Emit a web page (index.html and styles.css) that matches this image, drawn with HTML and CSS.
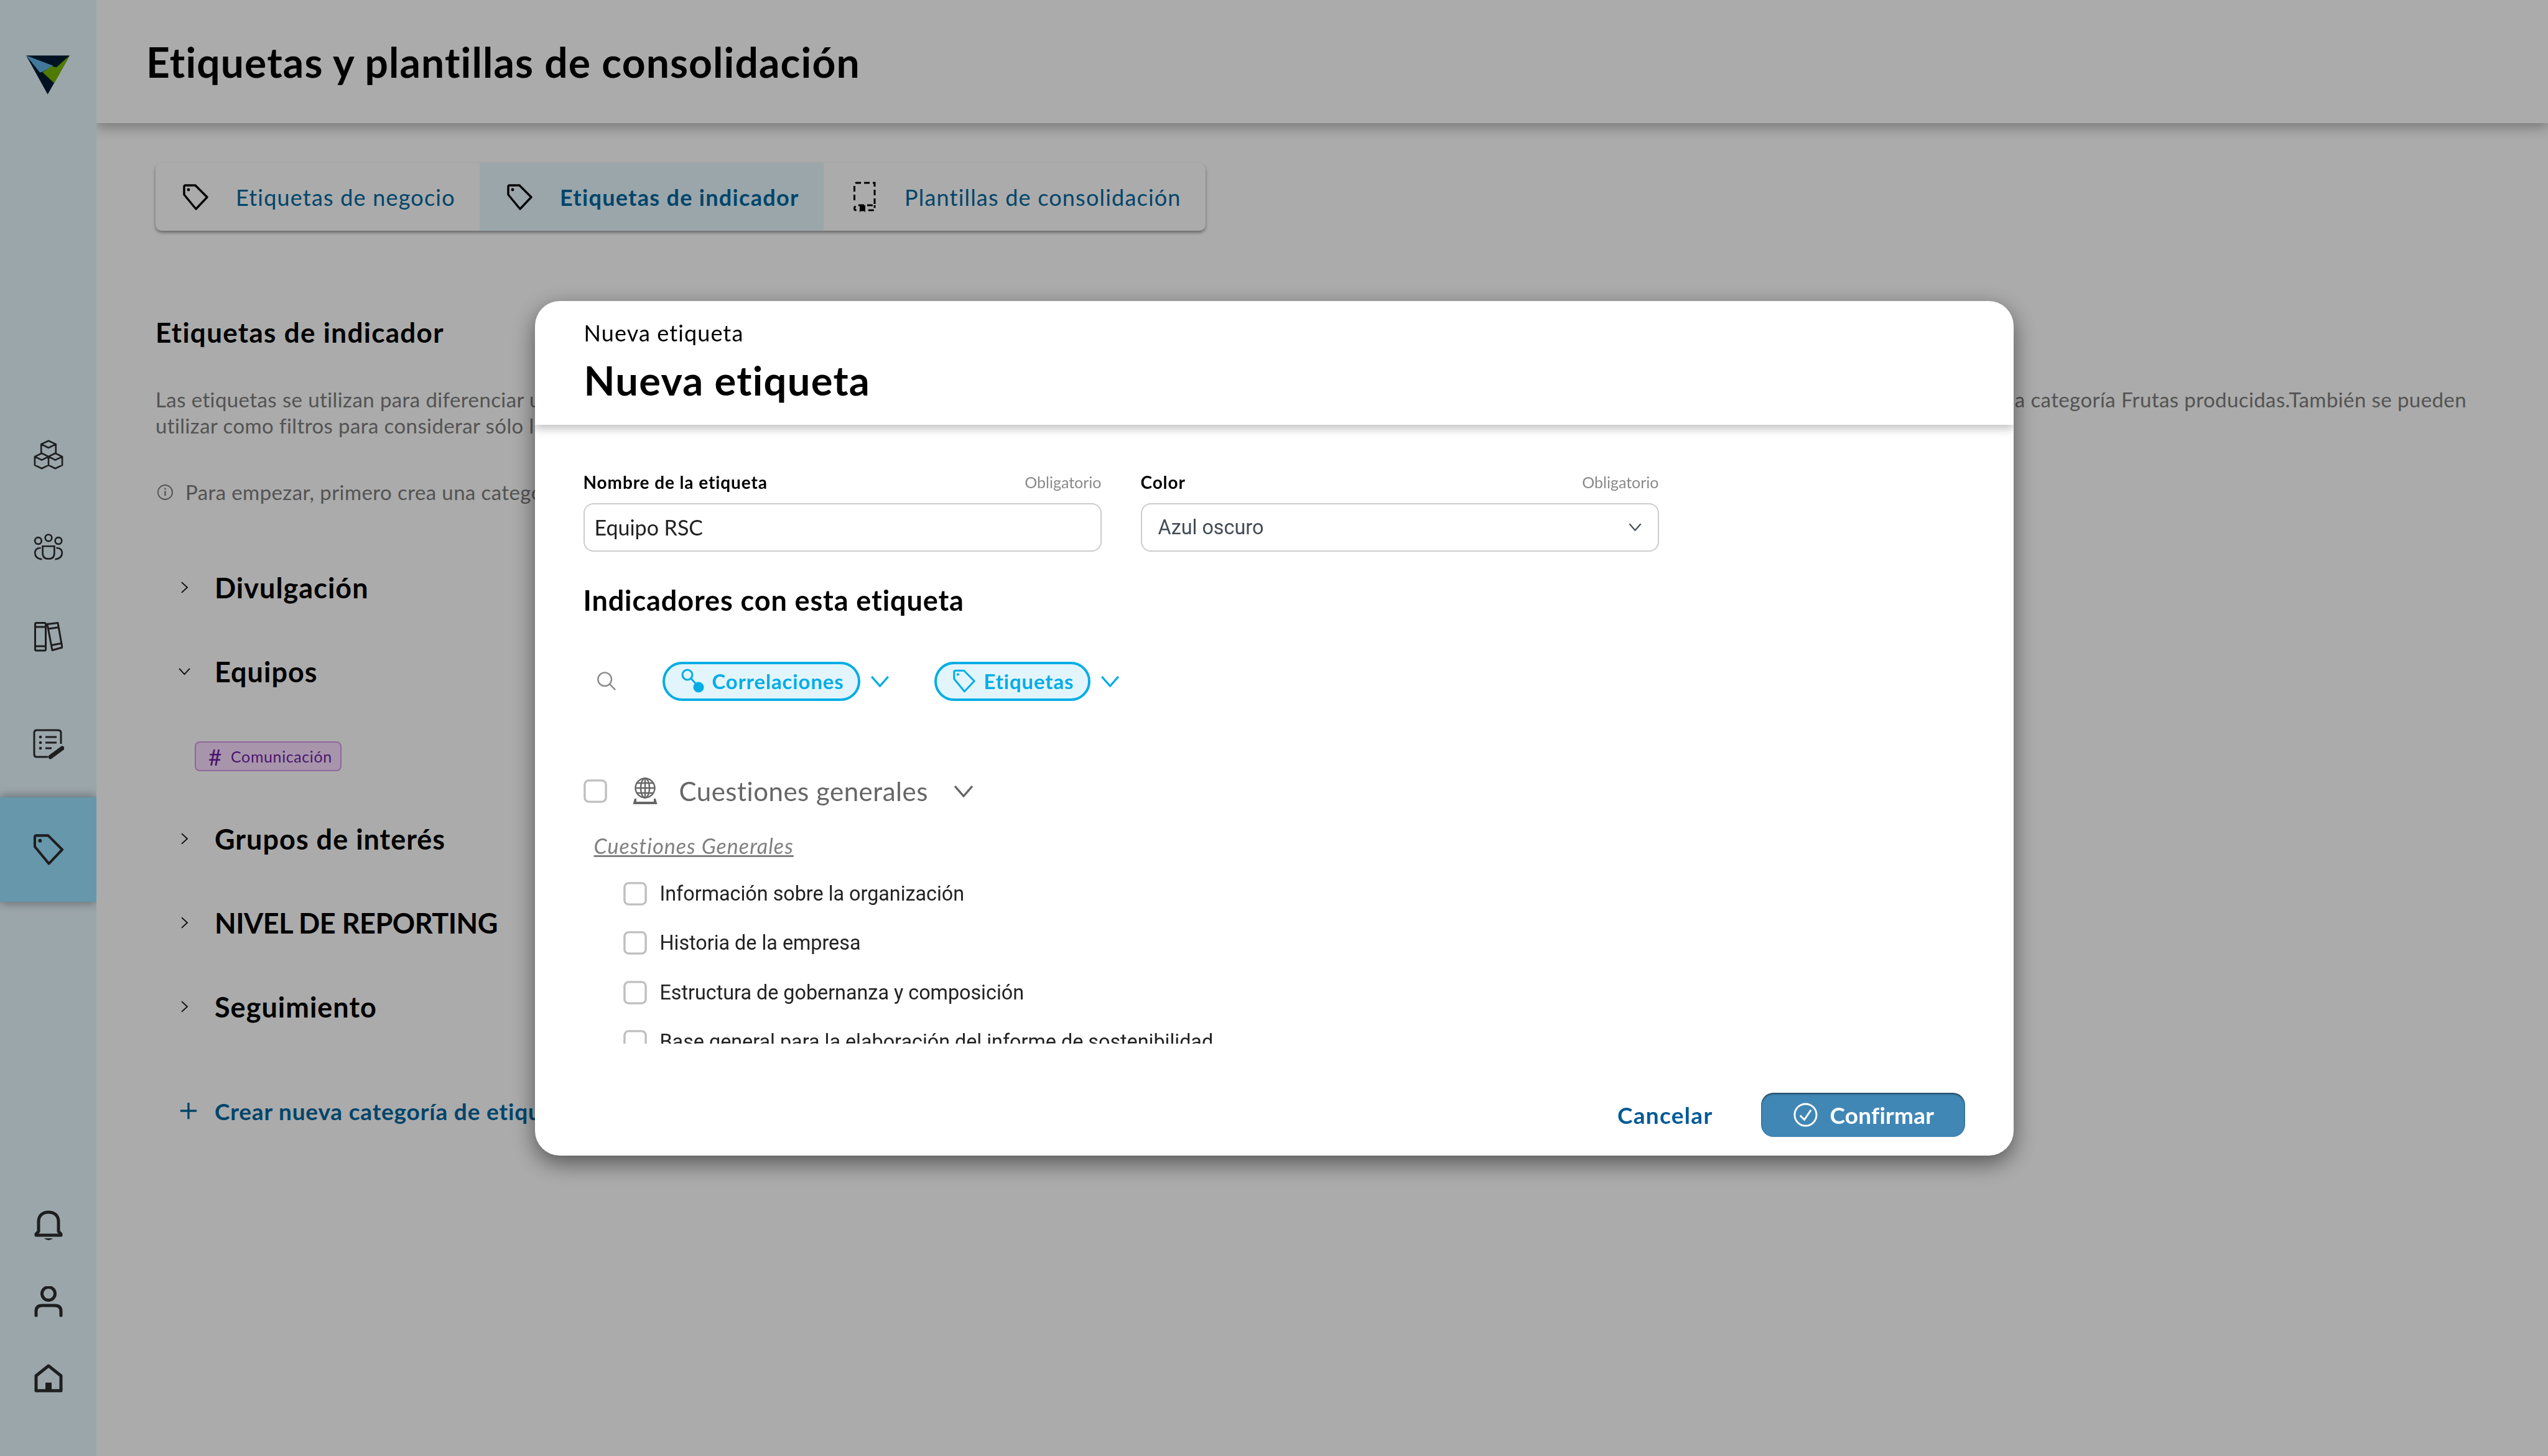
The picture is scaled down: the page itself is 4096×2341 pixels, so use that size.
FILE: index.html
```html
<!DOCTYPE html>
<html lang="es">
<head>
<meta charset="utf-8">
<title>Etiquetas y plantillas de consolidación</title>
<link rel="stylesheet" href="styles.css">
</head>
<body>
<svg class="defs" aria-hidden="true">
  <symbol id="tag" viewBox="0 0 41 42"><path d="M2 4Q2 2 4 2H20L39 21 21 40 2 17Z" fill="none" stroke="currentColor" stroke-width="3.4" stroke-linejoin="round"/><circle cx="9" cy="9" r="2.4" fill="currentColor"/></symbol>
  <symbol id="chev" viewBox="0 0 32 20"><path d="M2 2L16 18 30 2" fill="none" stroke="currentColor" stroke-width="3.4"/></symbol>
  <symbol id="box" viewBox="0 0 40 40"><rect x="2" y="2" width="36" height="36" rx="7" fill="#fff" stroke="#bfbfbf" stroke-width="3.6"/></symbol>
</svg>
<div class="app">
  <aside class="sidebar">
    <svg class="logo" viewBox="38 30 212 190"><polygon points="38,30 250,30 143,220" fill="#051c33"/><polygon points="38,30 170,80 118,110 105,113" fill="#62b4e9"/><polygon points="118,112 162,82 185,88 250,30 175,165" fill="#76b800"/></svg>
    <nav class="nav">
      <div class="nav-item cube"><svg class="nav-icon" viewBox="30 30 170 165"><path d="M115 37L155 55 115 75 75 55ZM75 55V105M155 55V105M78 105L115 123V170L78 188 40 170V123ZM40 123L78 142 115 123M152 105L190 123V170L152 188 115 170V123ZM115 123L152 142 190 123" fill="none" stroke="currentColor" stroke-width="9" stroke-linejoin="round"/></svg></div>
      <div class="nav-item people"><svg class="nav-icon" viewBox="35 485 160 145"><g fill="none" stroke="currentColor" stroke-width="8.5" stroke-linecap="round"><circle cx="115" cy="512" r="17"/><circle cx="62" cy="527" r="17"/><circle cx="166" cy="527" r="17"/><path d="M85 555H145V590Q145 620 115 620 85 620 85 590ZM72 564Q45 566 45 590 47 618 78 622M158 564Q185 566 185 590 183 618 152 622"/></g></svg></div>
      <div class="nav-item books"><svg class="nav-icon" viewBox="0 0 46 48"><g fill="none" stroke="currentColor" stroke-width="3" stroke-linejoin="round"><rect x="1.5" y="1.5" width="17" height="44.5" rx="2"/><path d="M2 8H18M2 39H18M21 3.5L38 1.5 45 41 29 45.5ZM23 11L40 8.500M27 37.500L43 34.500"/></g></svg></div>
      <div class="nav-item note"><svg class="nav-icon" viewBox="0 0 50 50"><g fill="none" stroke="currentColor" stroke-width="3"><path d="M24 45H6Q2 45 2 41V6Q2 2 6 2H40Q45 2 45 6V24M20 13H38M20 22H38M20 31H30"/><path d="M28 45L47 31" stroke-width="7" stroke-linecap="round"/></g><circle cx="12" cy="13" r="2.300" fill="currentColor"/><circle cx="12" cy="22" r="2.300" fill="currentColor"/><circle cx="12" cy="31" r="2.300" fill="currentColor"/></svg></div>
      <div class="nav-item active"><svg class="nav-icon"><use href="#tag"/></svg></div>
    </nav>
    <div class="nav-bottom">
      <div class="nav-item"><svg class="nav-icon" viewBox="0 0 46 50"><path d="M3 41H43V39L39 35V19C39 9 32 4 23 4 14 4 7 9 7 19V35L3 39Z" fill="none" stroke="currentColor" stroke-width="5" stroke-linejoin="round"/><path d="M16 46H30Q23 52 16 46Z" fill="currentColor"/></svg></div>
      <div class="nav-item"><svg class="nav-icon" viewBox="0 0 46 50"><circle cx="23" cy="12" r="10.500" fill="none" stroke="currentColor" stroke-width="5"/><path d="M3 47V40Q3 31 13 31H33Q43 31 43 40V47" fill="none" stroke="currentColor" stroke-width="5" stroke-linecap="round"/></svg></div>
      <div class="nav-item"><svg class="nav-icon" viewBox="0 0 46 46"><path d="M23 3L43 19V43H3V19Z" fill="none" stroke="currentColor" stroke-width="5" stroke-linejoin="round"/><rect x="18" y="30" width="10" height="12" fill="currentColor"/></svg></div>
    </div>
  </aside>
  <main class="main">
    <header class="header"><h1 class="page-title">Etiquetas y plantillas de consolidación</h1></header>
    <div class="content">
      <div class="tabs">
        <div class="tab t1"><svg class="tab-icon"><use href="#tag"/></svg><span>Etiquetas de negocio</span></div>
        <div class="tab t2 tab-on"><svg class="tab-icon"><use href="#tag"/></svg><span>Etiquetas de indicador</span></div>
        <div class="tab t3"><svg class="tab-icon tpl" viewBox="0 0 36 49"><path d="M1.500 30V6Q1.500 2 5 2H34V38H8Q1.500 38 1.500 44 1.500 46 5 46H34V38" fill="none" stroke="#000" stroke-width="3" stroke-dasharray="9 5"/><path d="M10 38H19V49L14.500 45 10 49Z"/></svg><span>Plantillas de consolidación</span></div>
      </div>
      <h2 class="section-title">Etiquetas de indicador</h2>
      <div class="desc">
        <p class="desc-line"><span>Las etiquetas se utilizan para diferenciar unos</span><span>la categoría Frutas producidas.También se pueden</span></p>
        <p class="desc-line">utilizar como filtros para considerar sólo las</p>
      </div>
      <div class="hint"><svg class="info" viewBox="0 0 28 28"><circle cx="14" cy="14" r="12" fill="none" stroke="currentColor" stroke-width="2"/><path d="M14 12V20M14 7V9.500" stroke="currentColor" stroke-width="2.400"/></svg><span>Para empezar, primero crea una categoría</span></div>
      <div class="accordion">
        <div class="acc-row"><svg class="acc-chev right" viewBox="0 0 20 32"><path d="M3 3L17 16 3 29" fill="none" stroke="currentColor" stroke-width="2.800"/></svg><span>Divulgación</span></div>
        <div class="acc-row"><svg class="acc-chev down" viewBox="0 0 32 20"><path d="M3 3L16 17 29 3" fill="none" stroke="currentColor" stroke-width="2.800"/></svg><span>Equipos</span></div>
        <div class="acc-body"><span class="chip"><span class="chip-hash">#</span>Comunicación</span></div>
        <div class="acc-row"><svg class="acc-chev right" viewBox="0 0 20 32"><path d="M3 3L17 16 3 29" fill="none" stroke="currentColor" stroke-width="2.800"/></svg><span>Grupos de interés</span></div>
        <div class="acc-row"><svg class="acc-chev right" viewBox="0 0 20 32"><path d="M3 3L17 16 3 29" fill="none" stroke="currentColor" stroke-width="2.800"/></svg><span class="caps">NIVEL DE REPORTING</span></div>
        <div class="acc-row"><svg class="acc-chev right" viewBox="0 0 20 32"><path d="M3 3L17 16 3 29" fill="none" stroke="currentColor" stroke-width="2.800"/></svg><span>Seguimiento</span></div>
      </div>
      <div class="create"><svg class="plus" viewBox="0 0 32 32"><path d="M16 2V30M2 16H30" stroke="currentColor" stroke-width="3.600"/></svg><span>Crear nueva categoría de etiquetas</span></div>
    </div>
  </main>
</div>
<div class="overlay">
  <section class="modal">
    <header class="modal-head">
      <div class="modal-kicker">Nueva etiqueta</div>
      <h2 class="modal-title">Nueva etiqueta</h2>
    </header>
    <div class="modal-body">
      <div class="fields">
        <div class="field">
          <div class="field-top"><label class="field-label">Nombre de la etiqueta</label><span class="field-req">Obligatorio</span></div>
          <div class="input">Equipo RSC</div>
        </div>
        <div class="field">
          <div class="field-top"><label class="field-label">Color</label><span class="field-req">Obligatorio</span></div>
          <div class="input select"><span>Azul oscuro</span><svg class="sel-chev"><use href="#chev"/></svg></div>
        </div>
      </div>
      <h3 class="sub-title">Indicadores con esta etiqueta</h3>
      <div class="filters">
        <svg class="search" viewBox="0 0 34 34"><circle cx="14" cy="14" r="11.500" fill="none" stroke="currentColor" stroke-width="2.600"/><path d="M22 22L32 32" stroke="currentColor" stroke-width="2.600"/></svg>
        <span class="pill p1"><svg class="pill-icon" viewBox="0 0 38 42"><circle cx="10" cy="11" r="8" fill="none" stroke="currentColor" stroke-width="3"/><path d="M16 17L25 27" stroke="currentColor" stroke-width="3"/><circle cx="28" cy="31" r="8.500" fill="currentColor"/></svg>Correlaciones</span>
        <svg class="pill-chev"><use href="#chev"/></svg>
        <span class="pill p2"><svg class="pill-icon tag-ic"><use href="#tag"/></svg>Etiquetas</span>
        <svg class="pill-chev"><use href="#chev"/></svg>
      </div>
      <div class="group">
        <svg class="check"><use href="#box"/></svg>
        <svg class="globe" viewBox="0 0 40 44"><g fill="none" stroke="currentColor" stroke-width="2.400"><circle cx="20" cy="17" r="15.500"/><ellipse cx="20" cy="17" rx="7" ry="15.500"/><path d="M4.500 17H35.500M7 9H33M7 25H33M20 1.500V32.500"/></g><path d="M3 34H6V39H34V34H37L39.500 43H.5Z" fill="currentColor"/></svg>
        <span class="group-name">Cuestiones generales</span>
        <svg class="group-chev"><use href="#chev"/></svg>
      </div>
      <div class="scroll">
        <div class="cat">Cuestiones Generales</div>
        <div class="item"><svg class="check"><use href="#box"/></svg><span>Información sobre la organización</span></div>
        <div class="item"><svg class="check"><use href="#box"/></svg><span>Historia de la empresa</span></div>
        <div class="item"><svg class="check"><use href="#box"/></svg><span>Estructura de gobernanza y composición</span></div>
        <div class="item"><svg class="check"><use href="#box"/></svg><span>Base general para la elaboración del informe de sostenibilidad</span></div>
      </div>
    </div>
    <footer class="modal-foot">
      <span class="cancel">Cancelar</span>
      <span class="confirm"><svg class="conf-icon" viewBox="0 0 40 40"><circle cx="20" cy="20" r="18" fill="none" stroke="#fff" stroke-width="3"/><path d="M11 21L18 28 29 12" fill="none" stroke="#fff" stroke-width="3"/></svg>Confirmar</span>
    </footer>
  </section>
</div>
</body>
</html>
```
FILE: styles.css
```css
* { box-sizing: border-box; }
html, body { margin: 0; height: 100%; overflow: hidden; }
body { font-family: "Lato", "Open Sans", sans-serif; color: #000; background: #fff; }
h1, h2, h3, p { margin: 0; font-weight: inherit; }
.defs { position: absolute; width: 0; height: 0; }
.app { display: flex; height: 2341px; }

.sidebar { width: 155px; flex: none; display: flex; flex-direction: column; background: #e8f8ff; color: #2d2d2d; padding-top: 89px; }
.logo { width: 70px; height: 63px; margin-left: 42px; flex: none; }
.nav { margin-top: 549px; display: flex; flex-direction: column; }
.nav-item { height: 60px; display: flex; align-items: center; justify-content: center; }
.nav-icon { width: 50px; height: 50px; }
.people { margin-top: 88px; }
.books { margin-top: 85px; }
.books .nav-icon { width: 46px; }
.note { margin-top: 113px; }
.nav-item.active { margin-top: 55px; height: 168px; background: #99e1ff; box-shadow: 0 0 16px rgba(0,0,0,.45); clip-path: inset(-24px 0 -24px 0); }
.nav-bottom { margin-top: auto; padding-bottom: 95px; display: flex; flex-direction: column; gap: 63px; }
.nav-bottom .nav-icon { width: 46px; }

.main { flex: 1; min-width: 0; }
.header { height: 198px; padding-left: 80px; display: flex; align-items: center; box-shadow: 0 6px 20px rgba(0,0,0,.32); clip-path: inset(0 0 -40px 0); }
.page-title { font-size: 66px; font-weight: 700; letter-spacing: 1.100px; }
.content { padding: 64px 95px 0; }

.tabs { display: inline-flex; height: 109px; border-radius: 10px; box-shadow: 0 3px 5px rgba(0,0,0,.4); }
.tab { display: flex; align-items: center; color: #00689f; font-size: 36px; letter-spacing: 1.200px; }
.t1 { width: 521px; padding-left: 44px; }
.t2 { width: 553px; padding-left: 44px; }
.t3 { width: 614px; padding-left: 48px; }
.tab-on { background: #e8f8ff; font-weight: 700; letter-spacing: 1.300px; }
.tab-icon { width: 41px; height: 42px; color: #000; margin-right: 44px; flex: none; }
.tpl { width: 36px; height: 49px; margin-right: 46px; }

.section-title { margin-top: 138px; height: 50px; line-height: 50px; font-size: 44px; font-weight: 700; letter-spacing: 1.300px; }
.desc { margin-top: 62px; color: #7c7c7c; font-size: 33px; line-height: 42px; width: 3715px; letter-spacing: .4px; }
.desc-line { display: flex; justify-content: space-between; }
.hint { margin-top: 65px; height: 42px; display: flex; align-items: center; color: #7c7c7c; font-size: 33px; letter-spacing: .4px; }
.info { width: 27px; height: 27px; margin: 0 19px 0 2px; }

.accordion { margin-top: 65px; }
.acc-row { height: 135px; display: flex; align-items: center; position: relative; padding-left: 95px; font-size: 45px; font-weight: 700; letter-spacing: 1px; }
.caps { letter-spacing: -.5px; }
.acc-chev { position: absolute; color: #111; }
.right { left: 40px; width: 13px; height: 21px; }
.down { left: 36px; width: 21px; height: 13px; }
.acc-body { padding: 45px 0 41px 63px; height: 134px; }
.chip { display: inline-flex; align-items: center; width: 236px; height: 48px; padding-left: 20px; border: 2px solid #d39ae8; border-radius: 8px; background: #fbdfff; color: #6f1fa8; font-size: 25px; letter-spacing: .6px; }
.chip-hash { font-size: 37px; line-height: 1; margin-right: 14px; }

.create { margin-top: 75px; height: 50px; display: flex; align-items: center; color: #00689f; font-size: 37px; font-weight: 700; letter-spacing: .8px; }
.plus { width: 30px; height: 30px; margin: 0 27px 0 38px; }

.overlay { position: fixed; inset: 0; background: rgba(0,0,0,.33); display: flex; align-items: center; justify-content: center; }
.modal { width: 2377px; height: 1374px; background: #fff; border-radius: 40px; box-shadow: 0 12px 36px rgba(0,0,0,.5); display: flex; flex-direction: column; overflow: hidden; }
.modal-head { height: 199px; flex: none; padding: 30px 79px 0; box-shadow: 0 6px 14px rgba(0,0,0,.25); position: relative; }
.modal-kicker { font-size: 36px; line-height: 42px; letter-spacing: 1.100px; }
.modal-title { font-size: 65px; line-height: 78px; font-weight: 700; margin-top: 16px; letter-spacing: 1.300px; }
.modal-body { flex: 1; min-height: 0; padding: 73px 78px 0; }

.fields { display: flex; gap: 63px; }
.field { width: 833px; }
.field-top { height: 38px; display: flex; justify-content: space-between; align-items: center; margin-bottom: 15px; }
.field-label { font-size: 28px; font-weight: 700; letter-spacing: .9px; }
.field-req { font-size: 25px; color: #8a8a8a; }
.input { height: 78px; border: 2px solid #ccc; border-radius: 16px; padding: 0 16px; display: flex; align-items: center; font-size: 34px; color: #222; }
.select { justify-content: space-between; padding: 0 26px; font-family: "Roboto", sans-serif; font-size: 32.300px; color: #444b54; }
.sel-chev { width: 21px; height: 13px; color: #444b54; }

.sub-title { margin-top: 53px; height: 50px; line-height: 50px; font-size: 45px; font-weight: 700; letter-spacing: .9px; }
.filters { margin-top: 74px; height: 63px; display: flex; align-items: center; color: #00ade6; }
.search { width: 32px; height: 32px; margin-left: 21px; margin-right: 74px; color: #8a8a8a; }
.pill { height: 63px; border: 4px solid #00ade6; border-radius: 32px; background: #e3f5fc; display: inline-flex; align-items: center; padding-left: 26px; font-size: 33px; font-weight: 700; letter-spacing: .85px; }
.p1 { width: 318px; }
.p2 { width: 251px; margin-left: 72px; }
.pill-icon { width: 38px; height: 42px; margin-right: 12px; flex: none; }
.tag-ic { width: 36px; height: 40px; margin-right: 14px; }
.pill-chev { width: 31px; height: 19px; margin-left: 16px; }

.group { margin-top: 125px; height: 40px; display: flex; align-items: center; color: #666; }
.group .check { margin-right: 41px; }
.check { width: 38px; height: 40px; flex: none; }
.globe { width: 40px; height: 44px; margin-right: 35px; }
.group-name { font-size: 42px; letter-spacing: .5px; }
.group-chev { width: 32px; height: 20px; margin-left: 41px; }

.scroll { height: 338px; margin-top: 48px; overflow: hidden; }
.cat { margin-left: 17px; height: 40px; line-height: 40px; font-size: 34px; font-style: italic; text-decoration: underline; color: #808080; letter-spacing: 1px; }
.item { margin-left: 64px; height: 79.300px; display: flex; align-items: center; font-family: "Roboto", sans-serif; font-size: 32.300px; color: #222; }
.cat + .item { margin-top: 18px; }
.item .check { margin-right: 21px; }

.modal-foot { height: 100px; flex: none; display: flex; align-items: center; justify-content: flex-end; padding: 0 78px 31px 0; }
.cancel { font-size: 37px; font-weight: 700; color: #005a96; margin-right: 77px; letter-spacing: 1.300px; }
.confirm { width: 328px; height: 71px; border-radius: 20px; background: #4187b6; box-shadow: inset 0 2px 3px rgba(0,0,0,.5); color: #fff; display: flex; align-items: center; padding-left: 52px; font-size: 37px; font-weight: 700; letter-spacing: .2px; }
.conf-icon { width: 39px; height: 39px; margin-right: 20px; }
```
